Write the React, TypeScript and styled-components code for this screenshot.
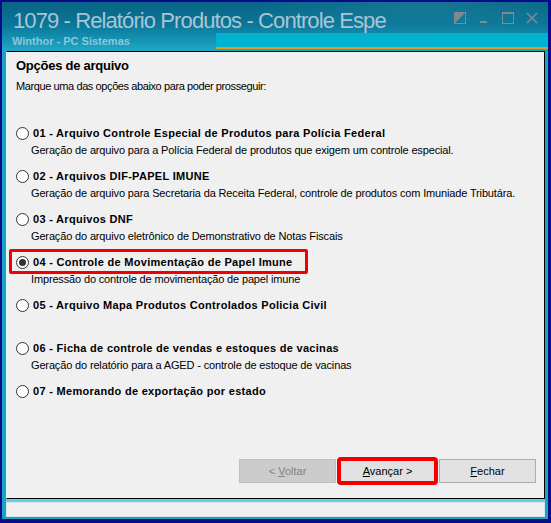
import React from "react";
import styled, { createGlobalStyle } from "styled-components";

const GlobalStyle = createGlobalStyle`
  html, body {
    margin: 0;
    padding: 0;
    background: #0a0a8c;
  }
  *, *::before, *::after {
    box-sizing: border-box;
  }
`;

const Window = styled.div`
  width: 551px;
  height: 523px;
  padding: 2px 3px 4px 2px;
  background: #0a0a8c;
  font-family: "Liberation Sans", Arial, sans-serif;
`;

const Frame = styled.div`
  display: flex;
  flex-direction: column;
  height: 100%;
  background: #1aa4c0;
`;

const TitleBar = styled.div`
  display: flex;
  flex-direction: column;
  height: 49px;
  background:
    radial-gradient(ellipse 260px 60px at 420px 0px, rgba(40, 140, 170, 0.45), transparent 70%),
    linear-gradient(180deg, #086383 0%, #0a7698 45%, #1596b6 80%, #20a8c4 100%);
`;

const TitleRow = styled.div`
  display: flex;
  align-items: flex-start;
  justify-content: space-between;
  height: 31px;
  padding: 6px 10px 0 11px;
`;

const TitleText = styled.div`
  color: #a9c4d4;
  font-family: "Liberation Sans", Arial, sans-serif;
  font-size: 22px;
  line-height: 25px;
  letter-spacing: -0.9px;
  white-space: nowrap;
`;

const Controls = styled.div`
  display: flex;
  gap: 12px;
  padding-top: 4px;
`;

const SubRow = styled.div`
  display: flex;
  height: 18px;
`;

const AppName = styled.div`
  width: 214px;
  padding: 2px 0 0 10px;
  color: #8dc6da;
  font-size: 11px;
  font-weight: bold;
  line-height: 12px;
`;

const Band = styled.div`
  flex: 1;
  background: linear-gradient(
    180deg,
    #00b2cf 0 14px,
    #e59a22 14px 16px,
    #00b2cf 16px
  );
`;

const Body = styled.div`
  display: flex;
  flex-direction: column;
  flex: 1;
  padding: 0 3px 0 4px;
`;

const Panel = styled.div`
  display: flex;
  flex-direction: column;
  height: 448px;
  background: #f0f0f0;
  border-top: 1px solid #000;
  border-right: 1px solid #000;
  border-bottom: 1px solid #000;
  border-left: 1px solid #e8f4f8;
  padding: 6px 8px 15px 9px;
  font-family: "Liberation Sans", Tahoma, sans-serif;
  color: #000;
`;

const Heading = styled.div`
  font-size: 13px;
  font-weight: bold;
  line-height: 16px;
  letter-spacing: -0.25px;
`;

const Hint = styled.div`
  margin-top: 5px;
  font-size: 11px;
  line-height: 14px;
  letter-spacing: -0.4px;
`;

const Options = styled.div`
  display: flex;
  flex-direction: column;
  margin-top: 32px;
`;

const Option = styled.div`
  display: flex;
  flex-direction: column;
  height: 43px;
`;

const OptionHead = styled.div<{ $marked?: boolean }>`
  position: relative;
  display: flex;
  align-items: center;
  gap: 4px;
  height: 16px;
  font-size: 11px;
  font-weight: bold;
  letter-spacing: 0.3px;
  white-space: nowrap;

  ${(p) =>
    p.$marked &&
    `
    &::after {
      content: "";
      position: absolute;
      left: -7px;
      top: -5px;
      width: 299px;
      height: 25px;
      border: 3px solid #f00000;
      border-radius: 2px;
    }
  `}
`;

const Radio = styled.span<{ $checked?: boolean }>`
  position: relative;
  flex: none;
  width: 13px;
  height: 13px;
  border: 1px solid #333;
  border-radius: 50%;
  background: #fff;

  ${(p) =>
    p.$checked &&
    `
    &::after {
      content: "";
      position: absolute;
      left: 2px;
      top: 2px;
      width: 7px;
      height: 7px;
      border-radius: 50%;
      background: #333;
    }
  `}
`;

const OptionDesc = styled.div`
  margin-top: 2px;
  padding-left: 15px;
  height: 14px;
  font-size: 11px;
  line-height: 14px;
  letter-spacing: -0.15px;
  white-space: nowrap;
`;

const Spacer = styled.div`
  flex: 1;
`;

const ButtonRow = styled.div`
  display: flex;
  justify-content: flex-end;
  gap: 3px;
`;

const Button = styled.button<{ $marked?: boolean }>`
  width: 97px;
  height: 24px;
  padding: 0;
  background: ${(p) => (p.disabled ? "#cccccc" : "#e1e1e1")};
  border: 1px solid ${(p) => (p.disabled ? "#bfbfbf" : "#adadad")};
  color: ${(p) => (p.disabled ? "#838383" : "#000")};
  font-family: "Liberation Sans", Tahoma, sans-serif;
  font-size: 11px;
  outline: ${(p) => (p.$marked ? "4px solid #f00000" : "none")};
  outline-offset: -2px;
  border-radius: ${(p) => (p.$marked ? "2px" : "0")};

  u {
    text-decoration: underline;
  }
`;

const Below = styled.div`
  height: 3px;
  background: #63d2e2;
`;

const StatusStrip = styled.div`
  height: 15px;
  background: #f0f0f0;
  border: 1px solid #d5e6ea;
`;

const MarkIcon = () => (
  <svg width="12" height="12" viewBox="0 0 12 12">
    <rect x="0.5" y="0.5" width="11" height="11" fill="none" stroke="#7f8a90" />
    <polygon points="0,0 12,0 0,12" fill="#7f8a90" />
  </svg>
);

const MinIcon = () => (
  <svg width="12" height="12" viewBox="0 0 12 12">
    <rect x="2" y="9" width="7" height="2" fill="#7f8a90" />
  </svg>
);

const MaxIcon = () => (
  <svg width="12" height="12" viewBox="0 0 12 12">
    <rect x="0.5" y="0.5" width="11" height="11" fill="none" stroke="#7f8a90" />
    <rect x="0" y="0" width="12" height="2" fill="#7f8a90" />
  </svg>
);

const CloseIcon = () => (
  <svg width="12" height="12" viewBox="0 0 12 12">
    <path d="M1 1 L11 11 M11 1 L1 11" stroke="#7f8a90" strokeWidth="1.6" />
  </svg>
);

const options = [
  {
    title: "01 - Arquivo Controle Especial de Produtos para Polícia Federal",
    desc: "Geração de arquivo para a Polícia Federal de produtos que exigem um controle especial.",
  },
  {
    title: "02 - Arquivos DIF-PAPEL IMUNE",
    desc: "Geração de arquivo para Secretaria da Receita Federal, controle de produtos com Imuniade Tributára.",
  },
  {
    title: "03 - Arquivos DNF",
    desc: "Geração do arquivo eletrônico de Demonstrativo de Notas Fiscais",
  },
  {
    title: "04 - Controle de Movimentação de Papel Imune",
    desc: "Impressão do controle de movimentação de papel imune",
    checked: true,
  },
  {
    title: "05 - Arquivo Mapa Produtos Controlados Policia Civil",
    desc: "",
  },
  {
    title: "06 - Ficha de controle de vendas e estoques de vacinas",
    desc: "Geração do relatório para a AGED - controle de estoque de vacinas",
  },
  {
    title: "07 - Memorando de exportação por estado",
    desc: "",
  },
];

const App = () => {
  return (
    <>
      <GlobalStyle />
      <Window>
        <Frame>
          <TitleBar>
            <TitleRow>
              <TitleText>1079 - Relatório Produtos - Controle Espe</TitleText>
              <Controls>
                <MarkIcon />
                <MinIcon />
                <MaxIcon />
                <CloseIcon />
              </Controls>
            </TitleRow>
            <SubRow>
              <AppName>Winthor - PC Sistemas</AppName>
              <Band />
            </SubRow>
          </TitleBar>

          <Body>
            <Panel>
              <Heading>Opções de arquivo</Heading>
              <Hint>Marque uma das opções abaixo para poder prosseguir:</Hint>

              <Options>
                {options.map((o) => (
                  <Option key={o.title}>
                    <OptionHead $marked={o.checked}>
                      <Radio $checked={o.checked} />
                      {o.title}
                    </OptionHead>
                    <OptionDesc>{o.desc}</OptionDesc>
                  </Option>
                ))}
              </Options>

              <Spacer />

              <ButtonRow>
                <Button disabled>
                  &lt; <u>V</u>oltar
                </Button>
                <Button $marked>
                  <u>A</u>vançar &gt;
                </Button>
                <Button>
                  <u>F</u>echar
                </Button>
              </ButtonRow>
            </Panel>
            <Below />
            <StatusStrip />
          </Body>
        </Frame>
      </Window>
    </>
  );
};

export default App;
